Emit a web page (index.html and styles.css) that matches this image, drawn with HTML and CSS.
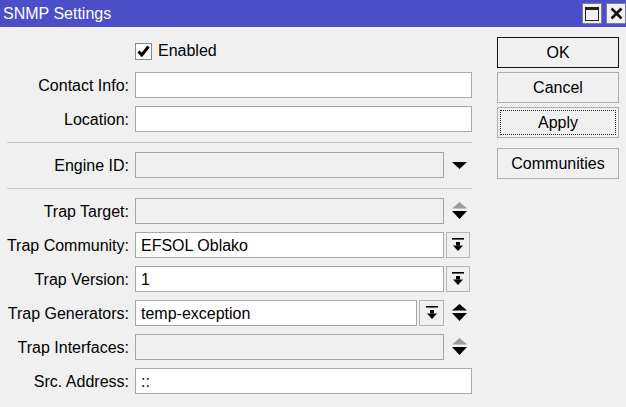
FILE: index.html
```html
<!DOCTYPE html>
<html>
<head>
<meta charset="utf-8">
<link rel="stylesheet" href="styles.css">
</head>
<body>
<div class="titlebar">
  <span class="title">SNMP Settings</span>
  <div class="tbtns">
    <div class="tbtn"><svg width="14" height="14" viewBox="0 0 14 14"><rect x="0.5" y="0.5" width="13" height="13" fill="none" stroke="#222" stroke-width="1"/><rect x="0" y="0" width="14" height="3" fill="#222"/></svg></div>
    <div class="tbtn"><svg width="13" height="13" viewBox="0 0 13 13"><path d="M1.5 1.5 L11.5 11.5 M11.5 1.5 L1.5 11.5" stroke="#111" stroke-width="2.6" fill="none"/></svg></div>
  </div>
</div>
<div class="window">
  <div class="form">
    <div class="label"></div>
    <div class="cell">
      <label class="check">
        <span class="box"><svg width="13" height="12" viewBox="0 0 13 12"><path d="M1.5 6.5 L4.8 10 L11.5 1.5" stroke="#000" stroke-width="3" fill="none"/></svg></span>
        <span>Enabled</span>
      </label>
    </div>

    <div class="label">Contact Info:</div>
    <div class="cell"><div class="input"></div></div>

    <div class="label">Location:</div>
    <div class="cell"><div class="input"></div></div>

    <div class="sep"></div>

    <div class="label">Engine ID:</div>
    <div class="cell"><div class="input disabled"></div><div class="icon"><svg width="15" height="7" viewBox="0 0 15 7"><polygon points="0,0 15,0 7.5,7" fill="#000"/></svg></div></div>

    <div class="sep"></div>

    <div class="label">Trap Target:</div>
    <div class="cell"><div class="input disabled"></div><div class="icon"><svg width="15" height="18" viewBox="0 0 15 18"><polygon points="0,6.5 7.5,0 15,6.5" fill="#9a9a9a"/><polygon points="0,9 15,9 7.5,17" fill="#000"/></svg></div></div>

    <div class="label">Trap Community:</div>
    <div class="cell"><div class="input">EFSOL Oblako</div><div class="dd"><svg width="12" height="14" viewBox="0 0 12 14"><rect x="0" y="0" width="12" height="1.6" fill="#000"/><rect x="4" y="4" width="4" height="3.5" fill="#000"/><polygon points="1,7.5 11,7.5 6,13" fill="#000"/></svg></div><div class="pad1"></div></div>

    <div class="label">Trap Version:</div>
    <div class="cell"><div class="input">1</div><div class="dd"><svg width="12" height="14" viewBox="0 0 12 14"><rect x="0" y="0" width="12" height="1.6" fill="#000"/><rect x="4" y="4" width="4" height="3.5" fill="#000"/><polygon points="1,7.5 11,7.5 6,13" fill="#000"/></svg></div><div class="pad1"></div></div>

    <div class="label">Trap Generators:</div>
    <div class="cell"><div class="input">temp-exception</div><div class="dd wide"><svg width="12" height="14" viewBox="0 0 12 14"><rect x="0" y="0" width="12" height="1.6" fill="#000"/><rect x="4" y="4" width="4" height="3.5" fill="#000"/><polygon points="1,7.5 11,7.5 6,13" fill="#000"/></svg></div><div class="icon"><svg width="15" height="18" viewBox="0 0 15 18"><polygon points="0,6.5 7.5,0 15,6.5" fill="#000"/><polygon points="0,9 15,9 7.5,17" fill="#000"/></svg></div></div>

    <div class="label">Trap Interfaces:</div>
    <div class="cell"><div class="input disabled"></div><div class="icon"><svg width="15" height="18" viewBox="0 0 15 18"><polygon points="0,6.5 7.5,0 15,6.5" fill="#9a9a9a"/><polygon points="0,9 15,9 7.5,17" fill="#000"/></svg></div></div>

    <div class="label">Src. Address:</div>
    <div class="cell"><div class="input">::</div></div>
  </div>

  <div class="actions">
    <div class="btn default">OK</div>
    <div class="btn">Cancel</div>
    <div class="btn focus"><span class="focusring">Apply</span></div>
    <div class="btn spaced">Communities</div>
  </div>
</div>
</body>
</html>
```
FILE: styles.css
```css
html, body {
  margin: 0;
  padding: 0;
}
body {
  width: 626px;
  height: 407px;
  background: #f0f0f0;
  font-family: "Liberation Sans", Arial, sans-serif;
  font-size: 16px;
  color: #000;
  overflow: hidden;
}
.titlebar {
  height: 27px;
  background: #4a4ec8;
  display: flex;
  align-items: center;
  justify-content: space-between;
}
.title {
  color: #fff;
  padding-left: 3px;
  font-size: 16px;
}
.tbtns {
  display: flex;
  gap: 4px;
}
.tbtn {
  width: 20px;
  height: 21px;
  box-sizing: border-box;
  background: #f0f0f0;
  border: 1px solid #7c7c9c;
  display: flex;
  align-items: center;
  justify-content: center;
}
.window {
  display: flex;
}
.form {
  width: 472px;
  padding-top: 11px;
  display: grid;
  grid-template-columns: 129px 337px;
  grid-template-rows: 26px 26px 26px 4px 26px 4px 26px 26px 26px 26px 26px 26px;
  column-gap: 6px;
  row-gap: 8px;
}
.label {
  text-align: right;
  display: flex;
  align-items: center;
  justify-content: flex-end;
  white-space: nowrap;
  padding-top: 1px;
}
.cell {
  display: flex;
  align-items: center;
  gap: 2px;
}
.check {
  display: flex;
  align-items: center;
  gap: 6px;
}
.box {
  width: 17px;
  height: 17px;
  box-sizing: border-box;
  background: #fff;
  border: 1px solid #8a8a8a;
  display: flex;
  align-items: center;
  justify-content: center;
}
.input {
  flex: 1;
  height: 26px;
  box-sizing: border-box;
  background: #fff;
  border: 1px solid #a8a8a8;
  padding-left: 5px;
  line-height: 25px;
  white-space: nowrap;
  overflow: hidden;
}
.input.disabled {
  background: #f0f0f0;
}
.icon {
  width: 25px;
  height: 26px;
  display: flex;
  align-items: center;
  justify-content: center;
  padding-left: 1px;
}
.dd {
  width: 24px;
  height: 26px;
  box-sizing: border-box;
  border: 1px solid #b4b4b4;
  background: #f0f0f0;
  display: flex;
  align-items: center;
  justify-content: center;
}
.dd.wide {
  width: 25px;
}
.pad1 {
  width: 0;
}
.sep {
  grid-column: 1 / -1;
  margin: 2px 0 1px 7px;
  height: 1px;
  background: #c8c8c8;
}
.actions {
  margin-left: 25px;
  padding-top: 10px;
  width: 122px;
  display: flex;
  flex-direction: column;
  gap: 4px;
}
.btn {
  height: 31px;
  box-sizing: border-box;
  border: 1px solid #adadad;
  background: #f0f0f0;
  display: flex;
  align-items: center;
  justify-content: center;
  color: #000;
}
.btn.default {
  border: 1.5px solid #111;
}
.btn.focus {
  padding: 2px;
}
.focusring {
  flex: 1;
  align-self: stretch;
  border: 1px dotted #222;
  display: flex;
  align-items: center;
  justify-content: center;
}
.btn.spaced {
  margin-top: 6px;
}
```
